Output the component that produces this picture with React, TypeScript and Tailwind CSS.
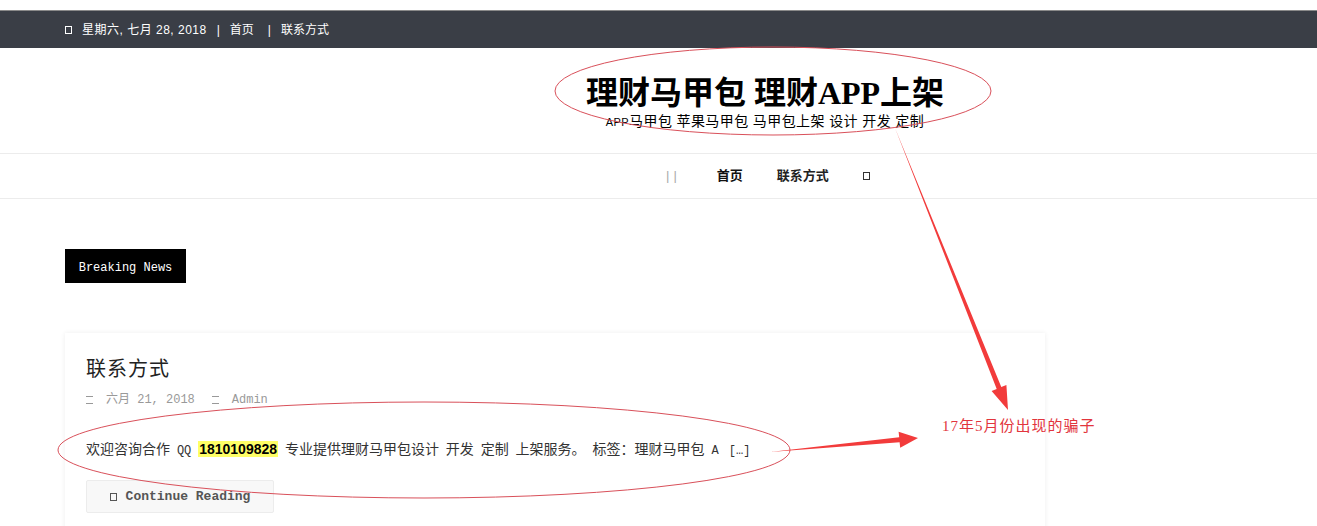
const cjk = "font-['Liberation_Sans','Noto_Sans_CJK_SC',sans-serif]";
const serif = "font-['Liberation_Serif','Noto_Sans_CJK_SC',serif]";
const mono = "font-['Liberation_Mono','Noto_Sans_CJK_SC',monospace]";

const Box = ({ className = "" }: { className?: string }) => (
  <span className={`inline-block w-[7px] h-[8px] border border-current ${className}`} />
);

const Annotations = () => (
  <svg
    className="absolute inset-0 pointer-events-none"
    width="1317"
    height="526"
    viewBox="0 0 1317 526"
  >
    <ellipse cx="773" cy="91" rx="218" ry="44" fill="none" stroke="#d9505a" strokeWidth="1" />
    <ellipse cx="424" cy="450" rx="366" ry="48" fill="none" stroke="#d9505a" strokeWidth="1" />
    {/* arrow to the note, from the header */}
    <polygon
      points="895,128 1001.3,387.1 1006.4,385 1008,410 991.6,391 996.7,388.9"
      fill="#f23b3b"
    />
    {/* arrow to the note, from the post text */}
    <polygon
      points="770,452 899.2,437.3 898.6,431.8 918,438 900.2,447.8 899.6,442.3"
      fill="#f23b3b"
    />
  </svg>
);

const App = () => {
  return (
    <div className={`relative w-[1317px] h-[526px] overflow-hidden bg-white ${cjk}`}>
      {/* top bar */}
      <div className="h-[10px] bg-white" />
      <div className="h-[38px] bg-[#3a3e46] border-t border-[#8a8a8a] flex items-center pl-[65px] text-[12px] text-white gap-[10px]">
        <Box />
        <span className="tracking-[0.5px]">星期六, 七月 28, 2018</span>
        <span>|</span>
        <span>首页</span>
        <span className="ml-[4px]">|</span>
        <span>联系方式</span>
      </div>

      {/* site title */}
      <div className="h-[105px] flex flex-col items-center justify-center pl-[213px] pt-[4px]">
        <h1 className={`${serif} font-bold text-[32px] leading-[36px] text-black`}>
          理财马甲包 理财APP上架
        </h1>
        <p className="text-[14px] leading-[18px] text-black mt-[1px] tracking-[0.4px]">
          <span className="text-[11px]">APP</span>马甲包 苹果马甲包 马甲包上架 设计 开发 定制
        </p>
      </div>

      {/* nav */}
      <nav className="h-[46px] border-y border-[#ececec] flex items-center pl-[666px] text-[13px]">
        <span className="text-[#aaa] tracking-[4px]">||</span>
        <span className="ml-[36px] font-bold text-[#111]">首页</span>
        <span className="ml-[34px] font-bold text-[#222]">联系方式</span>
        <Box className="ml-[34px] text-[#333]" />
      </nav>

      <main className="pl-[65px]">
        <div className="mt-[50px] w-[121px] h-[34px] bg-black flex items-center justify-center pt-[3px]">
          <span className={`${mono} text-white text-[12px]`}>Breaking News</span>
        </div>

        <article className="mt-[50px] w-[980px] h-[220px] bg-white shadow-[0_0_5px_rgba(0,0,0,0.07)] px-[21px] pt-[24px]">
          <h2 className={`${serif} text-[20px] leading-[24px] text-[#222] tracking-[1px]`}>联系方式</h2>
          <div className={`${mono} mt-[10px] flex items-center text-[12px] text-[#999]`}>
            <Box className="h-[6px] border-x-0" />
            <span className="ml-[13px]">六月 21, 2018</span>
            <Box className="ml-[17px] h-[6px] border-x-0" />
            <span className="ml-[13px]">Admin</span>
          </div>
          <p className="mt-[30px] text-[14px] leading-[20px] text-[#333] [word-spacing:3px]">
            欢迎咨询合作 <span className={`${mono} text-[12px]`}>QQ</span>{" "}
            <b className="bg-[#ffff66] text-black px-[1px]">1810109828</b> 专业提供理财马甲包设计 开发 定制 上架服务。 标签：理财马甲包{" "}
            <span className={`${mono} text-[12px]`}>A […]</span>
          </p>
          <button
            className={`${mono} mt-[19px] w-[188px] h-[33px] bg-[#f8f8f8] border border-[#ececec] rounded-[2px] flex items-center justify-center gap-[9px] text-[13px] font-bold text-[#555]`}
          >
            <Box className="h-[7px]" />
            Continue Reading
          </button>
        </article>
      </main>

      <div className={`absolute left-[942px] top-[415px] text-[15px] tracking-[1px] text-[#e2353d] ${serif}`}>
        17年5月份出现的骗子
      </div>

      <Annotations />
    </div>
  );
};

export default App;
